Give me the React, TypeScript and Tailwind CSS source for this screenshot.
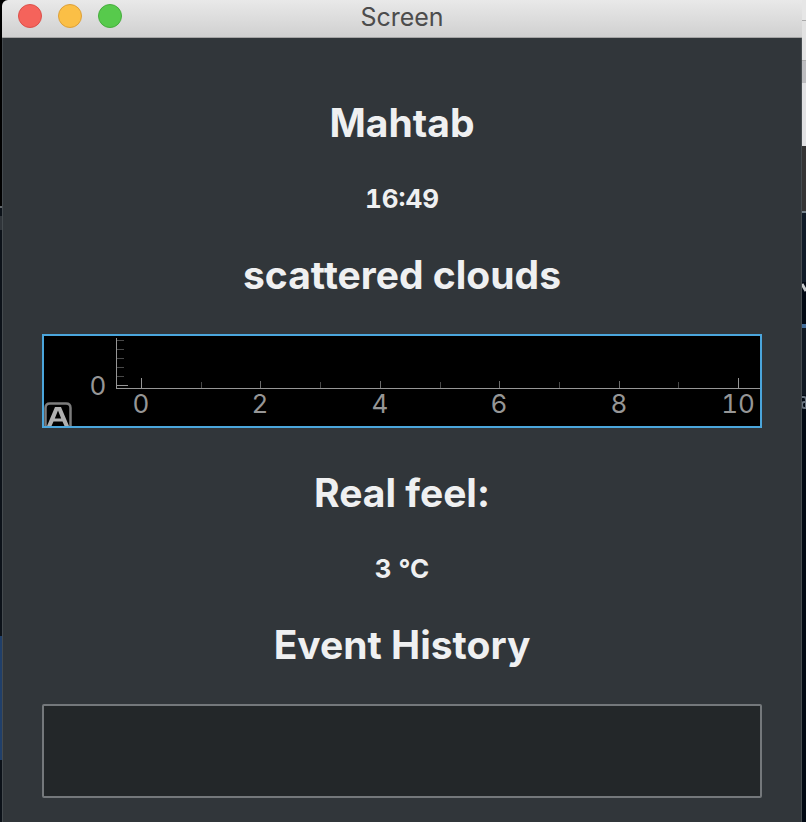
const xTicks = [
  { x: 97, label: "0", color: "#969696", top: 42 },
  { x: 157, label: "", color: "#484848", top: 46 },
  { x: 216, label: "2", color: "#6c6c6c", top: 45 },
  { x: 276, label: "", color: "#484848", top: 46 },
  { x: 336, label: "4", color: "#6c6c6c", top: 45 },
  { x: 396, label: "", color: "#484848", top: 46 },
  { x: 455, label: "6", color: "#6c6c6c", top: 45 },
  { x: 515, label: "", color: "#484848", top: 46 },
  { x: 575, label: "8", color: "#6c6c6c", top: 45 },
  { x: 634, label: "", color: "#484848", top: 46 },
  { x: 694, label: "10", color: "#969696", top: 42 },
];

const yTicks = [4, 13, 22, 31, 40];

function Plot() {
  return (
    <div className="relative border-2 border-[#4ba6dc] bg-black">
      <svg viewBox="0 0 716 90" className="block w-full tabular-nums" role="img" aria-label="Temperature plot">
        <g shapeRendering="crispEdges">
          <rect x="72" y="2" width="1" height="51" fill="#969696" />
          <rect x="72" y="52" width="644" height="1" fill="#969696" />
          {yTicks.map((y) => (
            <rect key={y} x="73" y={y} width="7" height="1" fill="#484848" />
          ))}
          <rect x="73" y="49" width="11" height="1" fill="#969696" />
          {xTicks.map((t) => (
            <rect key={t.x} x={t.x} y={t.top} width="1" height={52 - t.top} fill={t.color} />
          ))}
        </g>
        <g fill="#969696" fontSize="26" fontFamily="Inter, sans-serif" textAnchor="middle">
          <text x="54" y="59">0</text>
          {xTicks
            .filter((t) => t.label)
            .map((t) => (
              <text key={t.x} x={t.x} y="77">
                {t.label}
              </text>
            ))}
        </g>
      </svg>
      <button type="button" aria-label="Auto range" className="absolute bottom-0 left-0 block">
        <svg viewBox="0 0 30 24" className="block h-6 w-[30px]" fill="none">
          <path d="M1.500 24V6q0-4.500 4.500-4.500h16q4.500 0 4.500 4.500v18" stroke="#7c7c7c" strokeWidth="2.500" />
          <path
            d="M3 24L11 5h6l8 19h-4.500l-2-4.500h-9L7.500 24zM10.800 16.500h6.400L14 8.500z"
            fill="#b0b0b0"
            fillRule="evenodd"
          />
        </svg>
      </button>
    </div>
  );
}

function TitleBar() {
  return (
    <header className="grid h-[38px] shrink-0 grid-cols-[1fr_auto_1fr] items-start rounded-tl-md border-b border-[#a5a5a5] bg-linear-to-b from-[#e9e9e9] to-[#d0d0d0]">
      <div className="flex gap-4 pt-1 pl-4">
        <button type="button" aria-label="Close" className="size-6 rounded-full border border-[#dc504a] bg-[#f5635b]" />
        <button type="button" aria-label="Minimize" className="size-6 rounded-full border border-[#dda039] bg-[#fbbf46]" />
        <button type="button" aria-label="Zoom" className="size-6 rounded-full border border-[#46ad3d] bg-[#57ca4c]" />
      </div>
      <h1 className="text-[25px] leading-[34px] text-[#4c4c4c]">Screen</h1>
    </header>
  );
}

function LeftBackdrop() {
  return (
    <div className="flex w-0.5 shrink-0 flex-col bg-[#0c1219]" aria-hidden="true">
      <div className="h-[206px] bg-black" />
      <div className="h-0.5 bg-[#61666a]" />
      <div className="h-2" />
      <div className="h-[14px] bg-[#30353a]" />
      <div className="h-[406px]" />
      <div className="h-[124px] bg-[#203f69]" />
    </div>
  );
}

function RightBackdrop() {
  return (
    <div className="flex w-1 shrink-0 flex-col overflow-hidden bg-[#020914]" aria-hidden="true">
      <div className="h-[21px] border-b border-[#aaaaaa] bg-[#e6e6e6]" />
      <div className="h-10 border-b border-[#aaaaaa] bg-[#e2e2e2]" />
      <div className="h-[22px] bg-[#bcbcbf]" />
      <div className="h-[63px] bg-[#e1e1e3]" />
      <div className="h-[65px] bg-[#353434]" />
      <div className="h-0.5 bg-[#75818b]" />
      <div className="h-[69px] bg-[#101b28]" />
      <svg viewBox="0 0 4 12" className="h-3 w-1 shrink-0">
        <path d="M0 2l4 7" stroke="#c8cbce" strokeWidth="3" />
      </svg>
      <div className="h-[30px]" />
      <div className="h-1 bg-[#426d9b]" />
      <div className="h-[67px] bg-[#101822]" />
      <svg viewBox="0 0 4 15" className="h-[15px] w-1 shrink-0">
        <path d="M0 2h2q2 0 2 3v9M4 7H2Q0 7 0 10t2 3h2" stroke="#68737f" strokeWidth="2" fill="none" />
      </svg>
    </div>
  );
}

const heading = "text-[39px] leading-[48px] font-bold";
const value = "text-[26px] leading-8 font-bold tabular-nums";

export default function App() {
  return (
    <div className="flex min-h-screen bg-black font-[Inter,sans-serif]">
      <LeftBackdrop />
      <div className="flex min-w-0 flex-1 flex-col">
        <TitleBar />
        <main className="flex-1 border-x border-[#454b4f] bg-[#31363a] px-[39px] pb-6 text-[#eff0f1]">
          <section className="flex flex-col items-center gap-9 pt-[61px] pb-[35px]">
            <h2 className={heading}>Mahtab</h2>
            <p className={value}>16:49</p>
            <h2 className={heading}>scattered clouds</h2>
          </section>
          <Plot />
          <section className="flex flex-col items-center gap-9 pt-[41px] pb-[35px]">
            <h2 className={heading}>Real feel:</h2>
            <p className={value}>3 °C</p>
            <h2 id="history" className={heading}>Event History</h2>
          </section>
          <textarea
            aria-labelledby="history"
            readOnly
            className="block h-[94px] w-full resize-none rounded-xs border-2 border-[#74787b] bg-[#232729] p-2 text-[26px] outline-none"
          />
        </main>
      </div>
      <RightBackdrop />
    </div>
  );
}
